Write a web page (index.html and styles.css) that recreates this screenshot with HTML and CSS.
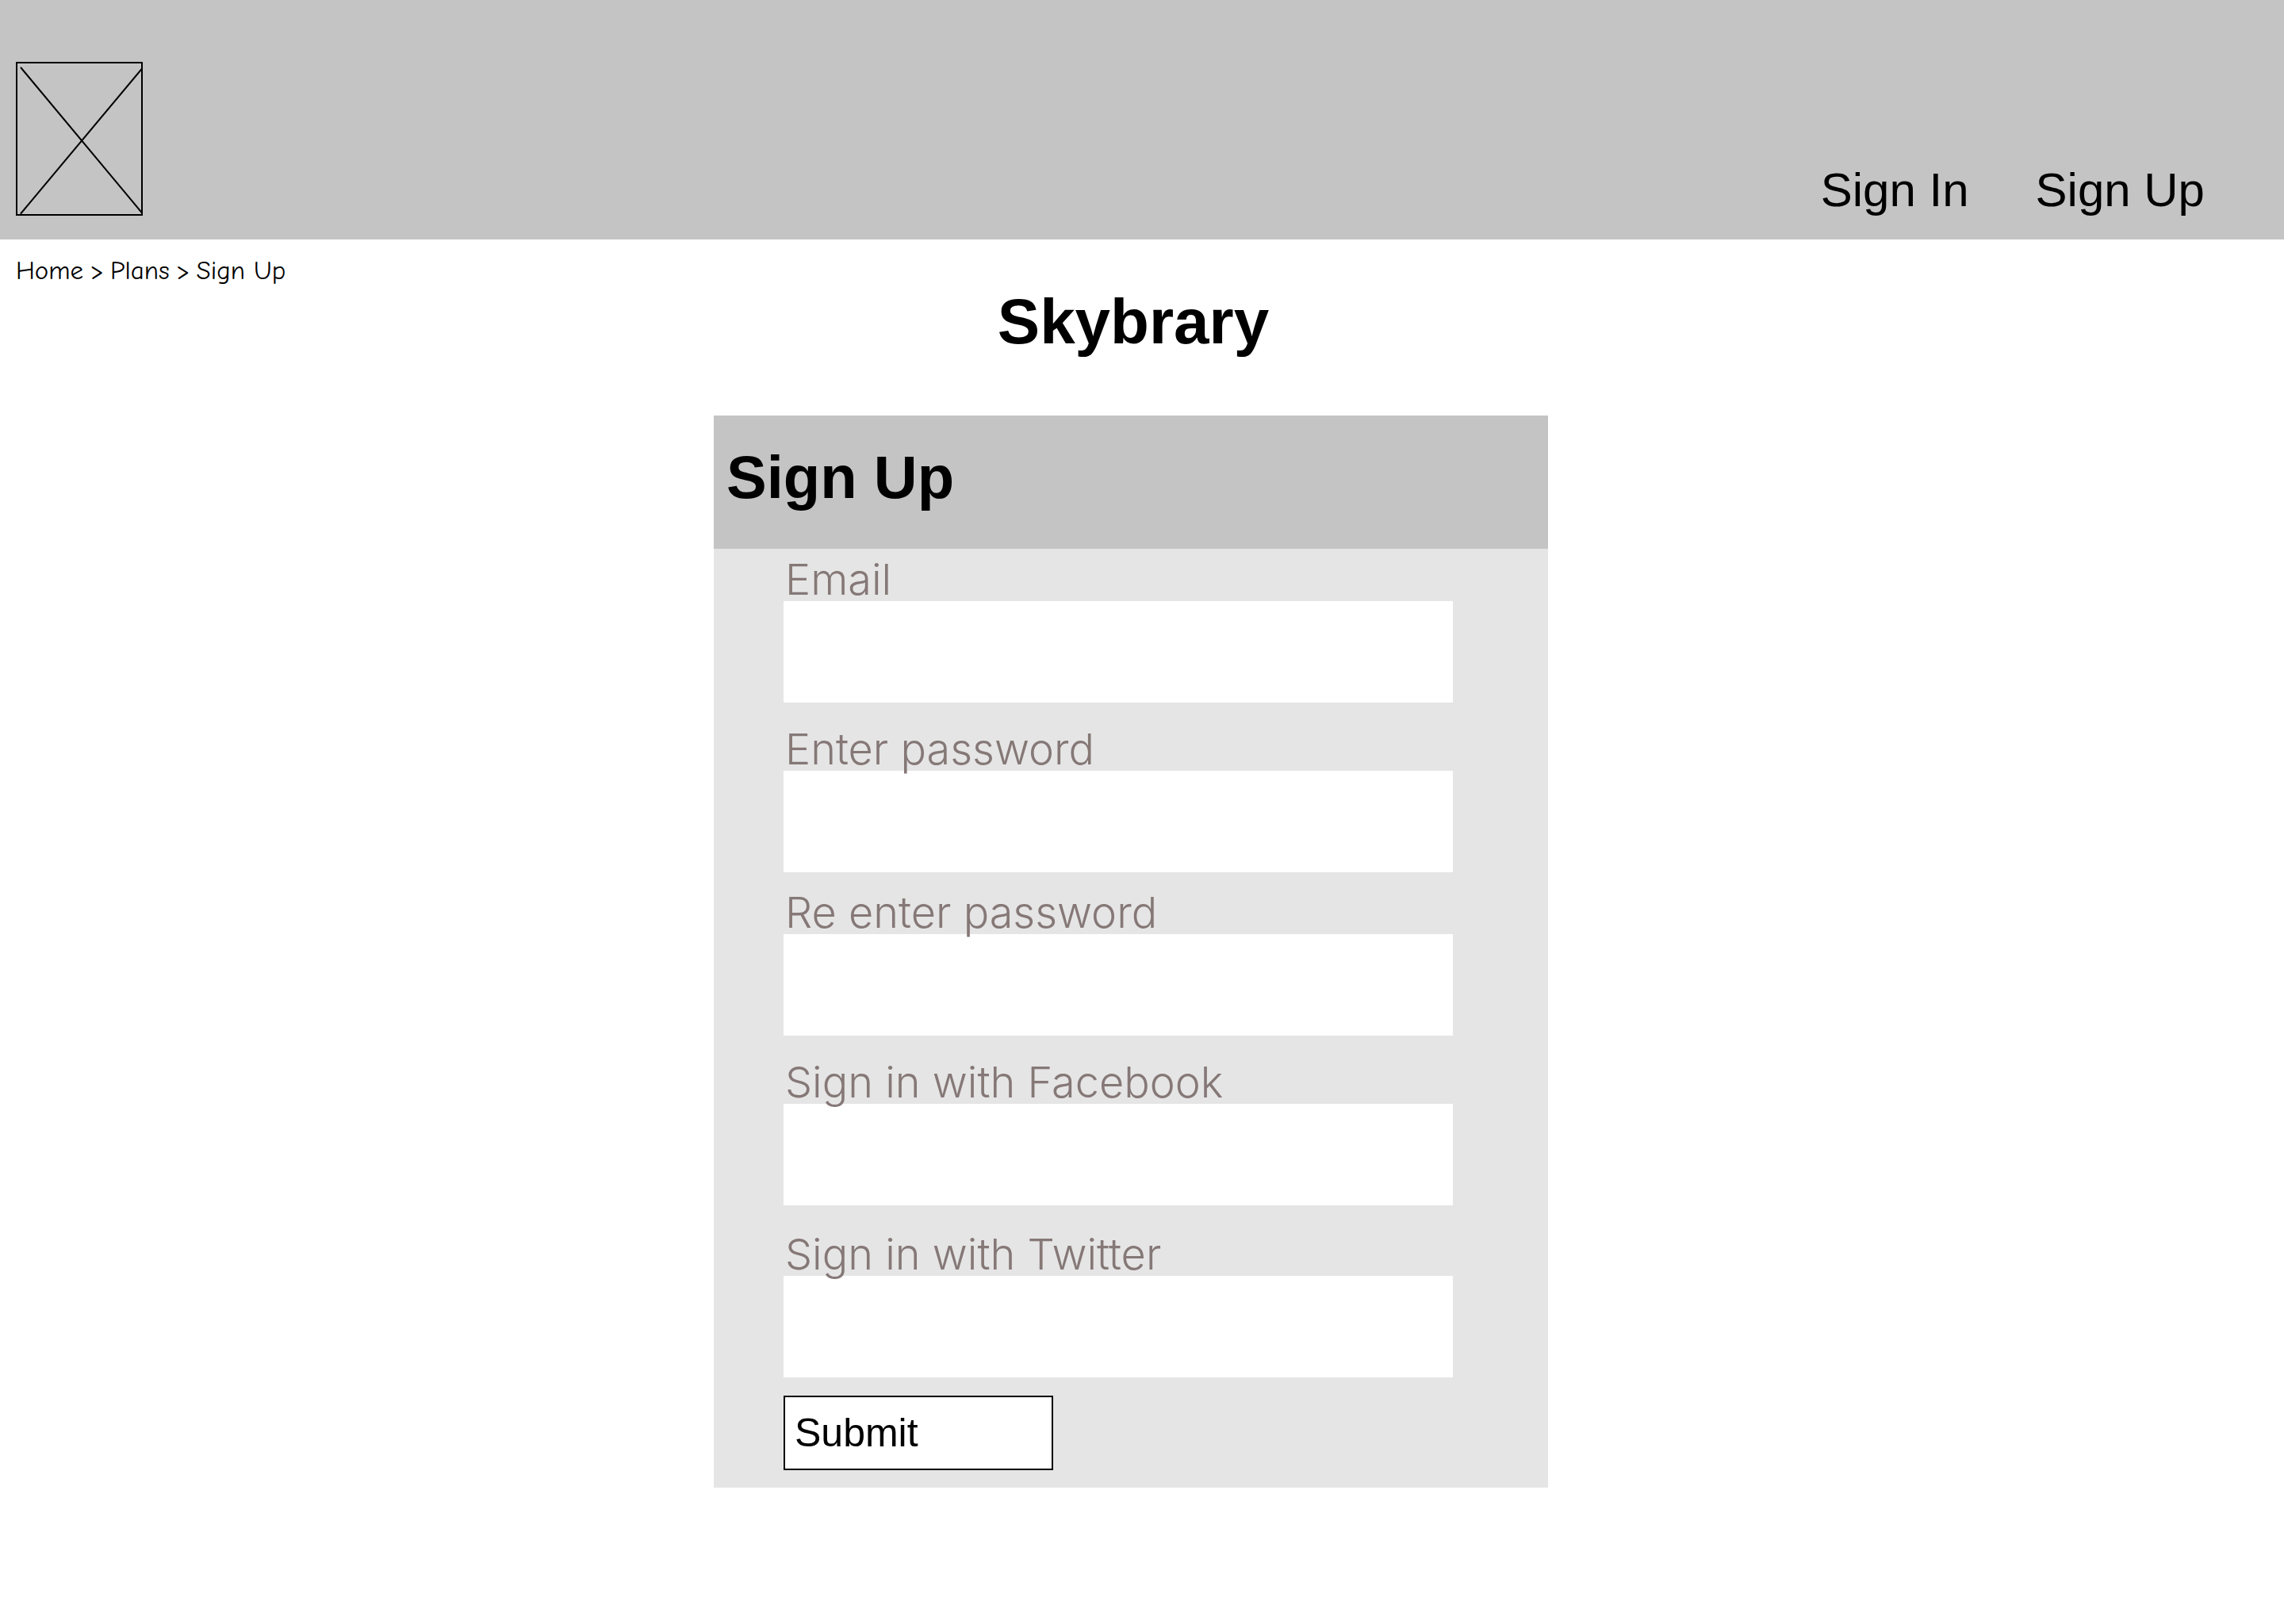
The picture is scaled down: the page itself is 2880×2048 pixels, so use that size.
FILE: index.html
```
<!DOCTYPE html>
<html lang="en">
<head>
<meta charset="utf-8">
<meta name="viewport" content="width=device-width, initial-scale=1">
<title>Skybrary - Sign Up</title>
<link rel="stylesheet" href="styles.css">
</head>
<body>
<header class="site-header">
  <a class="logo" href="#" aria-label="Skybrary home">
    <svg width="160" height="194" viewBox="0 0 160 194" fill="none" stroke="#000" stroke-width="2" aria-hidden="true">
      <rect x="1" y="1" width="158" height="192"/>
      <path d="M6.5 7.5 159.5 191M6.5 191 159.5 8" stroke-linecap="round" stroke-width="2"/>
    </svg>
  </a>
  <nav class="site-nav">
    <a href="#">Sign In</a>
    <a href="#">Sign Up</a>
  </nav>
</header>
<nav class="breadcrumb" aria-label="Breadcrumb">
  <a href="#">Home</a>
  <span>&gt;</span>
  <a href="#">Plans</a>
  <span>&gt;</span>
  <a href="#">Sign Up</a>
</nav>
<main class="content">
  <h1 class="title">Skybrary</h1>
  <section class="card">
    <h2 class="card-head">Sign Up</h2>
    <form class="form">
      <div class="field">
        <label for="email">Email</label>
        <input id="email" type="email">
      </div>
      <div class="field gap-medium">
        <label for="password">Enter password</label>
        <input id="password" type="password">
      </div>
      <div class="field gap-small">
        <label for="password-again">Re enter password</label>
        <input id="password-again" type="password">
      </div>
      <div class="field gap-medium">
        <label for="facebook">Sign in with Facebook</label>
        <input id="facebook" type="text">
      </div>
      <div class="field gap-large">
        <label for="twitter">Sign in with Twitter</label>
        <input id="twitter" type="text">
      </div>
      <button class="submit gap-large" type="submit">Submit</button>
    </form>
  </section>
</main>
</body>
</html>
```
FILE: styles.css
```
* {
  box-sizing: border-box;
}

body {
  margin: 0;
  background: #fff;
  color: #000;
  font-family: "Liberation Sans", Arial, sans-serif;
}

a {
  color: inherit;
  text-decoration: none;
}

.site-header {
  display: flex;
  align-items: flex-end;
  justify-content: space-between;
  padding: 78px 100px 30px 20px;
  background: #c4c4c4;
}

.logo svg {
  display: block;
}

.site-nav {
  display: flex;
  gap: 84px;
  font-size: 60px;
  line-height: 64px;
}

.breadcrumb {
  display: flex;
  gap: 8px;
  padding: 20px 20px 0;
  font-family: "Comic Sans MS", "Comic Neue", Lato, cursive;
  font-size: 33px;
  line-height: 38px;
}

.content {
  display: flex;
  flex-direction: column;
  align-items: center;
  padding: 0 28px 80px 0;
}

.title {
  margin: 0 0 72px;
  padding-left: 6px;
  font-size: 80px;
  line-height: 92px;
}

.card {
  width: 100%;
  max-width: 1052px;
  background: #e5e5e5;
}

.card-head {
  margin: 0;
  padding: 34px 16px 46px;
  background: #c4c4c4;
  font-size: 76px;
  line-height: 88px;
}

.form {
  display: flex;
  flex-direction: column;
  padding: 0 120px 22px 88px;
}

.field {
  display: flex;
  flex-direction: column;
}

.field label {
  position: relative;
  z-index: 1;
  padding: 12px 2px 0;
  color: #857877;
  font-family: Inter, "Liberation Sans", sans-serif;
  font-size: 54px;
  font-weight: 300;
  line-height: 54px;
}

.field input {
  width: 100%;
  height: 128px;
  padding: 0 16px;
  border: 0;
  border-radius: 0;
  background: #fff;
  font: inherit;
  font-size: 50px;
}

.gap-small {
  margin-top: 12px;
}

.gap-medium {
  margin-top: 20px;
}

.gap-large {
  margin-top: 23px;
}

.submit {
  align-self: flex-start;
  width: 340px;
  max-width: 100%;
  padding: 16px 12px;
  border: 2px solid #000;
  border-radius: 0;
  background: #fff;
  color: #000;
  font: inherit;
  font-size: 50px;
  line-height: 58px;
  text-align: left;
}
```
